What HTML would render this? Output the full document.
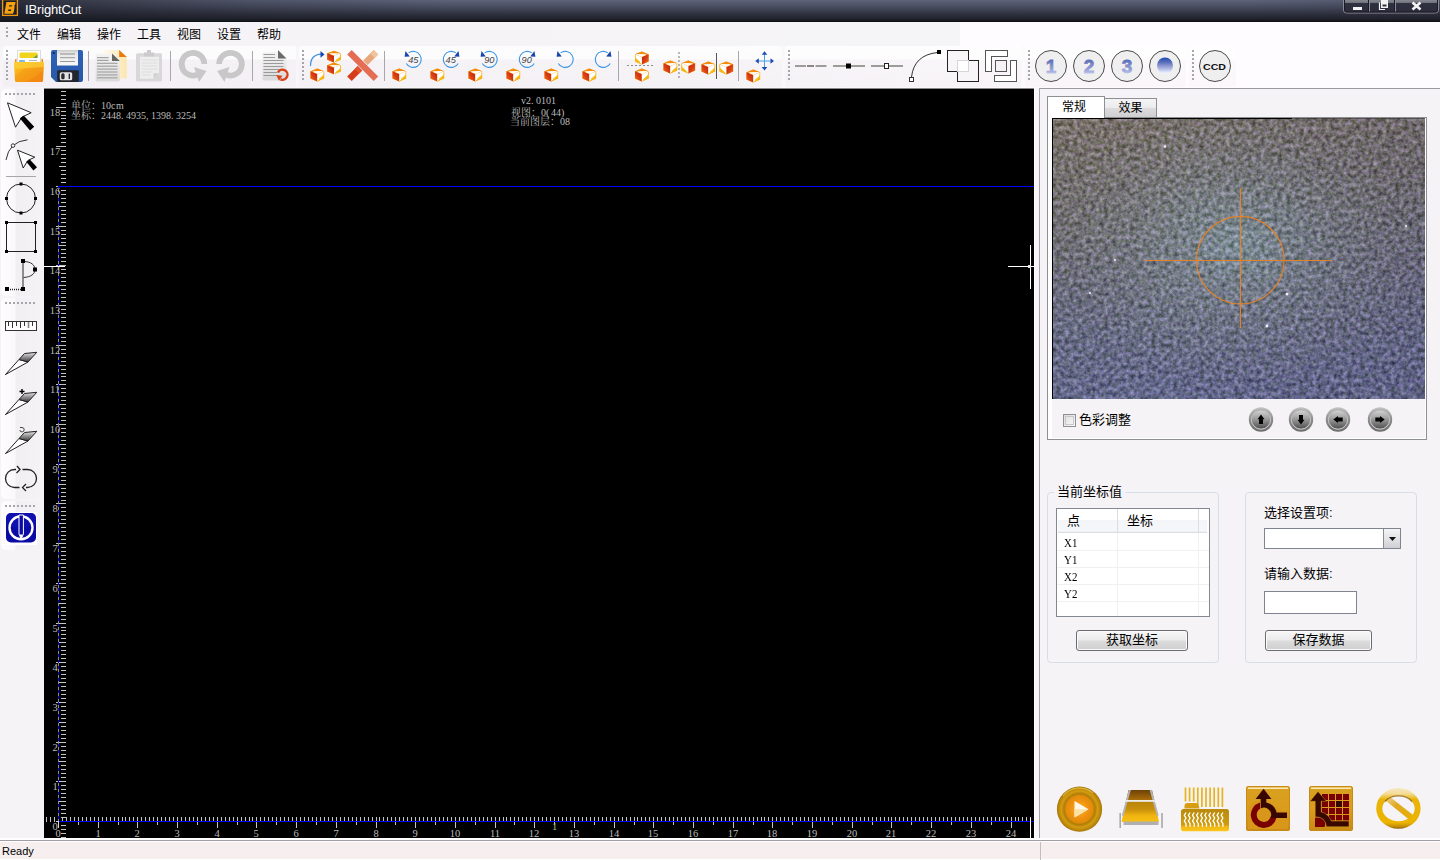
<!DOCTYPE html>
<html lang="zh-CN">
<head>
<meta charset="utf-8">
<title>IBrightCut</title>
<style>
html,body{margin:0;padding:0;}
body{width:1440px;height:860px;overflow:hidden;position:relative;background:#f6f3f7;font-family:"Liberation Sans","Noto Sans CJK SC",sans-serif;font-size:12px;color:#000;}
.a{position:absolute;}
svg{position:absolute;overflow:visible;}
.cj{font-family:"Liberation Sans","Noto Sans CJK SC",sans-serif;}
.sr{font-family:"Liberation Serif","Noto Serif CJK SC",serif;}
#title{left:0;top:0;width:1440px;height:22px;background:linear-gradient(90deg,rgba(24,26,34,.75) 0,rgba(24,26,34,.5) 90px,rgba(24,26,34,.2) 250px,rgba(24,26,34,0) 450px,rgba(24,26,34,0) 1250px,rgba(24,26,34,.2) 1440px),linear-gradient(#5e6378 0,#545970 3px,#484c5f 7px,#3a3d4d 11px,#2c2e3b 15px,#20222c 19px,#15161d 21px,#08080c 22px);}
#title .name{left:25px;top:2px;font-size:13px;line-height:16px;color:#fff;letter-spacing:-0.15px;}
#menubar{left:0;top:22px;width:1440px;height:24px;background:linear-gradient(90deg,#f6f3f7 0,#f5f4f6 960px,#fffcff 960px);}
#menubar .mi{top:6px;width:40px;text-align:center;font-size:12px;line-height:14px;}
#toolrow{left:0;top:46px;width:1440px;height:42px;background:#f6f3f7;}
.tb{top:0;height:41px;border-radius:3px;background:linear-gradient(rgba(255,255,255,.75) 0,rgba(255,255,255,.6) 13px,rgba(120,110,125,.022) 14px,rgba(120,110,125,.028) 27px,rgba(130,100,130,.034) 41px);}
.grip{width:3px;background:repeating-linear-gradient(#a8a5aa 0,#a8a5aa 2px,transparent 2px,transparent 4px);}
.gripw{height:3px;background:repeating-linear-gradient(90deg,#a8a5aa 0,#a8a5aa 2px,transparent 2px,transparent 4px);}
.sep{width:1px;background:#a9a6ab;}
.lb{left:1px;width:42px;border-radius:5px 0 0 5px;background:linear-gradient(90deg,#fefcff 0,#faf8fb 14px,#f2eff3 15px,#f6f3f7 42px);}
#left{left:0;top:88px;width:44px;height:752px;background:#f6f3f7;}
#canvas{left:44px;top:88px;width:990px;height:750px;background:#000;border-top:1px solid #8a888c;box-sizing:border-box;}
#status{left:0;top:842px;width:1440px;height:17px;background:#f7efef;}
#sline{left:0;top:838px;width:1440px;height:22px;background:linear-gradient(#fff 0,#fff 2px,#a09ea2 2px,#a09ea2 3px,#fff 3px);}
.btn{height:21px;box-sizing:border-box;border:1px solid #6c6c70;border-radius:3px;background:linear-gradient(#f7f7f7 0,#ebebeb 48%,#dcdcdc 52%,#cfcfcf 100%);text-align:center;font-size:13px;line-height:18px;box-shadow:inset 0 0 0 1px #fbfbfb;}
#right{left:1040px;top:88px;width:400px;height:752px;background:#f6f3f7;}
</style>
</head>
<body>
<div id="title" class="a">
  <svg width="22" height="22" style="left:0;top:0" viewBox="0 0 22 22">
    <rect x="2.600" y="-.4" width="14.800" height="15.800" fill="#1a1f2e" stroke="#f0980a" stroke-width="1.300"/>
    <path d="M6.400 2.100h9.200l-.5 2.600-.9 1 .5 1-.9 5.200-1 1.900H4.300z" fill="#f7a010"/>
    <path d="M9.300 5.200h2.700l-.3 1.400H9zM8.400 9.500h2.700l-.3 1.400H8.100z" fill="#1a1f2e"/>
  </svg>
  <div class="a name">IBrightCut</div>
  <svg width="100" height="22" style="left:1340px;top:0" viewBox="1340 0 100 22">
    <defs><linearGradient id="tbg" x1="0" y1="0" x2="0" y2="1"><stop offset="0" stop-color="#8e9098"/><stop offset="0.3" stop-color="#6d6f79"/><stop offset="0.31" stop-color="#2f3141"/><stop offset="1" stop-color="#2b2d3c"/></linearGradient></defs>
    <path d="M1343.5 -1V10a3 3 0 0 0 3 3h89a3 3 0 0 0 3-3V-1z" fill="url(#tbg)" stroke="#8a8c95" stroke-width="1"/>
    <path d="M1369.5 0V12M1395.500 0V12" stroke="#8a8c95" stroke-width="1" fill="none"/>
    <path d="M1368.5 0V12M1394.500 0V12M1344.5 0V10a2 2 0 0 0 2 2h89a2 2 0 0 0 2-2V0" stroke="#1a1b25" stroke-width="1" fill="none"/>
    <rect x="1353" y="7" width="9" height="3" fill="#f2f2f2"/>
    <path d="M1379.500 2.500v7h5.500" stroke="#f2f2f2" fill="none" stroke-width="1.2"/>
    <rect x="1381" y="0" width="7" height="8" fill="#f2f2f2"/>
    <rect x="1382.500" y="4.500" width="4" height="2" fill="#2f3141" stroke="#f2f2f2" stroke-width="0"/>
    <path d="M1412.500 2.500l8 7M1420.500 2.500l-8 7" stroke="#f4f4f4" stroke-width="2.600" fill="none"/>
  </svg>
</div>
<div id="menubar" class="a">
  <div class="a grip" style="left:6px;top:5px;height:11px;width:2px"></div>
  <div class="a mi" style="left:9px">文件</div>
  <div class="a mi" style="left:49px">编辑</div>
  <div class="a mi" style="left:89px">操作</div>
  <div class="a mi" style="left:129px">工具</div>
  <div class="a mi" style="left:169px">视图</div>
  <div class="a mi" style="left:209px">设置</div>
  <div class="a mi" style="left:249px">帮助</div>
</div>
<div id="toolrow" class="a" style="background:linear-gradient(90deg,#f7f4f8 0,#f9f7fa 780px,#fffcff 1200px)">
  <div class="a tb" style="left:3px;width:293px"></div>
  <div class="a tb" style="left:299px;width:483px"></div>
  <div class="a tb" style="left:785px;width:237px"></div>
  <div class="a tb" style="left:1025px;width:161px"></div>
  <div class="a tb" style="left:1189px;width:47px"></div>
  <div class="a grip" style="left:6px;top:4px;height:31px;width:2px"></div>
  <div class="a grip" style="left:302px;top:4px;height:31px;width:2px"></div>
  <div class="a grip" style="left:788px;top:4px;height:31px;width:2px"></div>
  <div class="a grip" style="left:1028px;top:4px;height:31px;width:2px"></div>
  <div class="a grip" style="left:1192px;top:4px;height:31px;width:2px"></div>
  <div class="a sep" style="left:88px;top:5px;height:30px"></div>
  <div class="a sep" style="left:170px;top:5px;height:30px"></div>
  <div class="a sep" style="left:252px;top:5px;height:30px"></div>
  <div class="a sep" style="left:384px;top:5px;height:30px"></div>
  <div class="a sep" style="left:618px;top:5px;height:30px"></div>
  <div class="a sep" style="left:738px;top:5px;height:30px"></div>
</div>
<svg id="tbicons" width="1440" height="42" style="left:0;top:46px" viewBox="0 46 1440 42">
<defs>
  <linearGradient id="gFold" x1="0" y1="0" x2="1" y2="1"><stop offset="0" stop-color="#fcc419"/><stop offset="0.35" stop-color="#f8b01a"/><stop offset="0.36" stop-color="#f6a318"/><stop offset="0.7" stop-color="#f49716"/><stop offset="0.71" stop-color="#f28c14"/><stop offset="1" stop-color="#f08410"/></linearGradient>
  <linearGradient id="gBlue" x1="0" y1="0" x2="0" y2="1"><stop offset="0" stop-color="#2f62b8"/><stop offset="1" stop-color="#2657a8"/></linearGradient>
  <linearGradient id="gLbl" x1="0" y1="0" x2="0" y2="1"><stop offset="0" stop-color="#c9c9c9"/><stop offset="0.2" stop-color="#e6e6e6"/><stop offset="1" stop-color="#fafafa"/></linearGradient>
  <linearGradient id="gCream" x1="0" y1="0" x2="1" y2="0"><stop offset="0" stop-color="#fffaf0"/><stop offset="0.6" stop-color="#fdeec8"/><stop offset="1" stop-color="#fbe6b0"/></linearGradient>
  <linearGradient id="gDoc" x1="0" y1="0" x2="0" y2="1"><stop offset="0" stop-color="#f4f4f4"/><stop offset="1" stop-color="#d9d9d9"/></linearGradient>
  <linearGradient id="gCubL" x1="1" y1="0" x2="0" y2="1"><stop offset="0" stop-color="#c41c10"/><stop offset="0.5" stop-color="#d63c14"/><stop offset="0.8" stop-color="#e66010"/><stop offset="1" stop-color="#f49010"/></linearGradient><linearGradient id="gCubL2" x1="0" y1="0" x2="1" y2="1"><stop offset="0" stop-color="#c41c10"/><stop offset="0.5" stop-color="#d63c14"/><stop offset="0.8" stop-color="#e66010"/><stop offset="1" stop-color="#f49010"/></linearGradient><linearGradient id="gCubR2" x1="1" y1="0" x2="0" y2="1"><stop offset="0" stop-color="#ffffff"/><stop offset="0.5" stop-color="#ffffff"/><stop offset="0.52" stop-color="#f8c21a"/><stop offset="1" stop-color="#f5a60f"/></linearGradient>
  <linearGradient id="gCubR" x1="0" y1="0" x2="1" y2="1"><stop offset="0" stop-color="#ffffff"/><stop offset="0.5" stop-color="#ffffff"/><stop offset="0.52" stop-color="#f8c21a"/><stop offset="1" stop-color="#f5a60f"/></linearGradient>
  <linearGradient id="gNum" x1="0" y1="0" x2="0" y2="1"><stop offset="0" stop-color="#3f58b4"/><stop offset="0.35" stop-color="#7480c0"/><stop offset="0.7" stop-color="#9fa9dc"/><stop offset="1" stop-color="#e4ebfa"/></linearGradient>
  <linearGradient id="gBall" x1="0" y1="0" x2="0" y2="1"><stop offset="0" stop-color="#1f4db0"/><stop offset="0.3" stop-color="#5a6fbc"/><stop offset="0.5" stop-color="#8a93cc"/><stop offset="0.75" stop-color="#b8c4ea"/><stop offset="1" stop-color="#f4f7ff"/></linearGradient>
  <g id="cube">
    <path d="M7 0L13.800 2.900L13.800 10L7 13L0.200 10L0.200 2.900Z" fill="#f7a014"/>
    <path d="M7 0.200L13.600 2.900L7 5.700L0.400 2.900Z" fill="#f58c0c"/>
    <path d="M3 2.900L11.600 2.700L12.800 3.200L7.300 5.500L2.600 3.600Z" fill="#fff"/>
    <path d="M0.200 2.900L7 5.800L7 13L0.200 10Z" fill="url(#gCubL)"/>
    <path d="M7 5.800L13.800 2.900L13.800 10L7 13Z" fill="url(#gCubR)"/>
    <path d="M7.600 6L13 3.700L13 6.600L8.200 10.800L7.600 10.800Z" fill="#fff"/>
  </g>
  <g id="cubeR">
    <path d="M7 0L13.800 2.900L13.800 10L7 13L0.200 10L0.200 2.900Z" fill="#f7a014"/>
    <path d="M7 0.200L13.600 2.900L7 5.700L0.400 2.900Z" fill="#f58c0c"/>
    <path d="M11 2.900L2.400 2.700L1.200 3.200L6.700 5.500L11.400 3.600Z" fill="#fff"/>
    <path d="M13.800 2.900L7 5.800L7 13L13.800 10Z" fill="url(#gCubL2)"/>
    <path d="M7 5.800L0.200 2.900L0.200 10L7 13Z" fill="url(#gCubR2)"/>
    <path d="M6.400 6L1 3.700L1 6.600L5.800 10.800L6.400 10.800Z" fill="#fff"/>
  </g>
</defs>
<!-- open folder -->
<g>
  <rect x="17.500" y="50.500" width="23" height="14" fill="#fff" stroke="#dcdcdc" stroke-width="1"/>
  <rect x="19.500" y="52.500" width="18" height="5.500" rx="1.200" fill="#f0d41c"/>
  <path d="M33 58L37.500 54.500V58Z" fill="#6f9a4a"/>
  <rect x="19" y="60" width="6" height="3" rx="1" fill="#7db8e6"/>
  <rect x="29" y="60" width="8" height="1" fill="#b5b5b5"/>
  <path d="M15 62v-2.500l1.500-1v3.500zM43 62v-2.500l-1.500-1v3.500z" fill="#f08a10"/>
  <path d="M14 63.500q0-1.500 1.500-1.500h27q1.500 0 1.500 1.500l-1 17q0 1.500-1.500 1.500h-25q-1.500 0-1.500-1.500z" fill="url(#gFold)"/>
  <path d="M14 63.500q0-1.500 1.500-1.500h27q1.500 0 1.500 1.500l-.2 3.500-29.600 2z" fill="#fcd23a" opacity=".7"/>
</g>
<!-- save floppy -->
<g>
  <path d="M53 50h28q2 0 2 2v28q0 2-2 2H56l-5-5V52q0-2 2-2z" fill="url(#gBlue)"/>
  <rect x="57" y="50" width="21" height="15.500" fill="url(#gLbl)"/>
  <rect x="60" y="53.300" width="15" height="1.400" fill="#a9a9a9"/>
  <rect x="60" y="57.200" width="15" height="1" fill="#9a9a9a"/>
  <rect x="60" y="61" width="15" height="1" fill="#9a9a9a"/>
  <rect x="52.800" y="52" width="2" height="2" fill="#142a5a"/>
  <rect x="57.200" y="70.200" width="21.600" height="11.800" rx="1" fill="#24262e"/>
  <rect x="59.800" y="72.200" width="12.400" height="8" rx="1.500" fill="#e4e4e4"/>
  <rect x="61.200" y="73.200" width="3.400" height="6" rx="1.500" fill="#2b2d35"/>
  <rect x="68.600" y="73.400" width="1.400" height="5.600" rx=".6" fill="#2b2d35"/>
</g>
<!-- copy -->
<g>
  <path d="M102.600 50h16.600l7.600 7v20.400q0 1-1 1h-23.200z" fill="url(#gCream)"/>
  <path d="M119.200 50l7.600 7h-7.600z" fill="#e87a10"/>
  <path d="M95.600 55q0-1.400 1.400-1.400h15l7.800 7.500v19q0 1.500-1.500 1.500h-21.200q-1.500 0-1.500-1.500z" fill="url(#gDoc)"/>
  <path d="M112 53.600l7.800 7.500h-7.800z" fill="#666"/>
  <g fill="#a4a4a4"><rect x="97" y="57" width="11.600" height="1.200"/><rect x="97" y="59.800" width="11.600" height="1.200"/><rect x="97" y="62.700" width="20.500" height="1.200"/><rect x="97" y="65.600" width="20.500" height="1.200"/><rect x="97" y="68.500" width="20.500" height="1.200"/><rect x="97" y="71.400" width="20.500" height="1.200"/><rect x="97" y="74.300" width="20.500" height="1.200"/><rect x="97" y="77.200" width="20.500" height="1.200"/></g>
</g>
<!-- paste (disabled) -->
<g>
  <rect x="136" y="53.300" width="26" height="28.300" rx="1.500" fill="#d9d7d9"/>
  <path d="M144 56.800v-4.300h3v-2.500h4v2.500h3v4.300z" fill="#cccacc"/>
  <path d="M140 56.800h19v16.500l-5.500 5.500h-13.500z" fill="#eeeeee"/>
  <path d="M159 73.300l-5.500 5.500v-5.500z" fill="#d0d0d0"/>
  <g fill="#dcdcdc"><rect x="141.500" y="59.500" width="16" height="1"/><rect x="141.500" y="62.500" width="16" height="1"/><rect x="141.500" y="65.500" width="16" height="1"/><rect x="141.500" y="68.500" width="16" height="1"/><rect x="141.500" y="71.500" width="10" height="1"/><rect x="141.500" y="74.500" width="9" height="1"/></g>
</g>
<!-- undo/redo (disabled) -->

<g>
  <path d="M193 50a14.200 14.200 0 1 0 8.500 25.500l-3-4.800A8.500 8.500 0 1 1 201.500 64l5.700 0A14.200 14.200 0 0 0 193 50z" fill="#c8c8c8"/>
  <path d="M194 67l12.500 4-7.500 11z" fill="#c8c8c8"/>
  <path d="M230.500 50a14.200 14.200 0 1 1 -8.500 25.500l3-4.800A8.500 8.500 0 1 0 222 64l-5.700 0A14.200 14.200 0 0 1 230.500 50z" fill="#c8c8c8"/>
  <path d="M229.500 67l-12.500 4 7.500 11z" fill="#c8c8c8"/>
</g>
<!-- doc refresh -->
<g>
  <path d="M262.500 52h15.500l8.500 8v19q0 1.500-1.500 1.500h-21q-1.500 0-1.500-1.500z" fill="url(#gDoc)"/>
  <path d="M278 50l8.500 8.500h-8.500z" fill="#6b6b6b"/>
  <g fill="#9a9a9a"><rect x="263.500" y="54" width="11.500" height="1"/><rect x="263.500" y="57" width="11.500" height="1"/><rect x="263.500" y="60" width="20" height="1"/><rect x="263.500" y="63" width="20" height="1"/><rect x="263.500" y="66" width="20" height="1"/><rect x="263.500" y="69" width="20" height="1"/><rect x="263.500" y="72" width="14" height="1"/><rect x="263.500" y="75" width="14" height="1"/></g>
  <path d="M278 72.500a5 5 0 1 1 2.500 6.800" fill="none" stroke="#d8431c" stroke-width="2.400"/>
  <path d="M276.200 75l6.200 .8-3.400 5z" fill="#d8431c"/>
</g>
</svg>
<svg id="tbicons2" width="1440" height="42" style="left:0;top:46px" viewBox="0 46 1440 42">
<!-- group move -->
<use href="#cube" x="310.3" y="68.4"/><use href="#cube" transform="translate(327,50.700) scale(1,.9)"/><use href="#cube" transform="translate(327,62.600) scale(1,.9)"/>
<path d="M310.500 66q0-11.500 11-11.800" fill="none" stroke="#3d8fe0" stroke-width="1.2"/>
<path d="M320.500 51l4 3.500-4 3.200z" fill="#1746b0"/>
<!-- delete -->
<g transform="translate(-.8,0)"><path d="M348 54.500l4.500-4.500 26.500 26.500-4.500 4.500z" fill="#e36e54"/><path d="M374.500 50l4.500 4.500-10.500 10.500-4.500-4.500z" fill="#e9a77c"/><path d="M374.500 50l4.500 4.500-3.500 3.500-4.500-4.500z" fill="#f0c49c"/><path d="M352.500 81l-4.500-4.500 10.500-10.500 4.500 4.500z" fill="#d63c1c"/><path d="M358.500 66l4.500 4.500-3 3-4.500-4.500z" fill="#e0562c"/></g>
<!-- rotate -->
<use href="#cube" x="392.3" y="68.4"/><path d="M408.61 52.85A8 8 0 1 1 406.27 63.40" fill="none" stroke="#3d96e4" stroke-width="1.100"/><path d="M405.5 51.0l4.300 5.500-5.200 .2z" fill="#1746b0"/><text x="413.3" y="62.7" font-family="Liberation Sans, sans-serif" font-style="italic" font-size="9.200" text-anchor="middle" fill="#444">45</text>
<use href="#cube" x="430.3" y="68.4"/><path d="M455.89 52.85A8 8 0 1 0 458.23 63.40" fill="none" stroke="#3d96e4" stroke-width="1.100"/><path d="M458.5 51.0l-4.300 5.500 5.200 .2z" fill="#1746b0"/><text x="450.7" y="62.7" font-family="Liberation Sans, sans-serif" font-style="italic" font-size="9.200" text-anchor="middle" fill="#444">45</text>
<use href="#cube" x="468.3" y="68.4"/><path d="M484.61 52.85A8 8 0 1 1 482.27 63.40" fill="none" stroke="#3d96e4" stroke-width="1.100"/><path d="M481.5 51.0l4.300 5.500-5.200 .2z" fill="#1746b0"/><text x="489.3" y="62.7" font-family="Liberation Sans, sans-serif" font-style="italic" font-size="9.200" text-anchor="middle" fill="#444">90</text>
<use href="#cube" x="506.3" y="68.4"/><path d="M531.89 52.85A8 8 0 1 0 534.23 63.40" fill="none" stroke="#3d96e4" stroke-width="1.100"/><path d="M534.5 51.0l-4.300 5.500 5.200 .2z" fill="#1746b0"/><text x="526.7" y="62.7" font-family="Liberation Sans, sans-serif" font-style="italic" font-size="9.200" text-anchor="middle" fill="#444">90</text>
<use href="#cube" x="544.3" y="68.4"/><path d="M560.61 52.85A8 8 0 1 1 558.27 63.40" fill="none" stroke="#3d96e4" stroke-width="1.100"/><path d="M557.5 51.0l4.300 5.500-5.200 .2z" fill="#1746b0"/>
<use href="#cube" x="582.3" y="68.4"/><path d="M607.89 52.85A8 8 0 1 0 610.23 63.40" fill="none" stroke="#3d96e4" stroke-width="1.100"/><path d="M610.5 51.0l-4.300 5.500 5.200 .2z" fill="#1746b0"/>
<!-- mirror -->
<use href="#cubeR" x="634.8" y="51.4"/><use href="#cube" x="634.8" y="68.4"/>
<path d="M627 65.500h28" stroke="#8c8c8c" stroke-width="1.200" stroke-dasharray="2 2" fill="none"/>
<use href="#cube" x="663.3" y="60.4"/><use href="#cubeR" x="681.3" y="60.4"/>
<path d="M679 52v26" stroke="#8c8c8c" stroke-width="1.200" stroke-dasharray="2 2" fill="none"/>
<use href="#cube" x="701.3" y="61.4"/><use href="#cubeR" x="719.3" y="61.4"/>
<path d="M716.500 53v26" stroke="#555" stroke-width="1" fill="none"/>
<!-- move -->
<use href="#cube" x="746.3" y="69.4"/>
<path d="M764.500 54v14M757.500 61h14" stroke="#4aa0e8" stroke-width="1" fill="none"/>
<path d="M764.500 51.300l2.800 3.500h-5.600zM764.500 70.500l2.800-3.500h-5.600zM755.300 61l3.500-2.700v5.400zM774 61l-3.500-2.700v5.400z" fill="#1a4cb4"/>
<!-- lines -->
<path d="M795 66h11M815.500 66h11" stroke="#9c9c98" stroke-width="2" fill="none"/><path d="M807 66h7" stroke="#8e8686" stroke-width="2" fill="none"/>
<path d="M833 66h32" stroke="#9c9c98" stroke-width="2" fill="none"/><rect x="846" y="63.500" width="5" height="5" fill="#000"/>
<path d="M871 66h32" stroke="#9c9c98" stroke-width="2" fill="none"/><rect x="884.500" y="63.500" width="4" height="5" fill="#fff" stroke="#222" stroke-width="1"/>
<path d="M911.500 77q2.500-22 26-24.500" fill="none" stroke="#333" stroke-width="1"/><rect x="909.500" y="77.500" width="4" height="4" fill="#fff" stroke="#333" stroke-width="1"/><rect x="937" y="50" width="4" height="4" fill="#000"/>
<g shape-rendering="crispEdges"><path d="M947.500 50.500H968.500V60.500H978.500V81.500H957.500V71.500H947.500Z" fill="#f7f5f8" stroke="#222" stroke-width="1"/><rect x="957.500" y="60.500" width="11" height="11" fill="#fff" stroke="#d6d6d6" stroke-width="1"/></g>
<g fill="#fff" stroke="#555" stroke-width="1" shape-rendering="crispEdges"><path d="M985.500 50.500H1007.500V56.500H991.500V71.500H985.500Z"/><rect x="995.500" y="60.500" width="11" height="11" fill="#f4f2f4"/><path d="M1016.500 60.500V81.500H994.500V75.500H1010.500V60.500Z"/></g>
<!-- circles -->
<circle cx="1051" cy="66" r="15.500" fill="#efeff0" stroke="#4a4a4a" stroke-width="1"/>
<text x="1051" y="73" font-family="Liberation Sans, sans-serif" font-weight="bold" font-size="19" text-anchor="middle" fill="url(#gNum)" stroke="url(#gNum)" stroke-width="0.800">1</text>
<circle cx="1089" cy="66" r="15.500" fill="#efeff0" stroke="#4a4a4a" stroke-width="1"/>
<text x="1089" y="73" font-family="Liberation Sans, sans-serif" font-weight="bold" font-size="19" text-anchor="middle" fill="url(#gNum)" stroke="url(#gNum)" stroke-width="0.800">2</text>
<circle cx="1127" cy="66" r="15.500" fill="#efeff0" stroke="#4a4a4a" stroke-width="1"/>
<text x="1127" y="73" font-family="Liberation Sans, sans-serif" font-weight="bold" font-size="19" text-anchor="middle" fill="url(#gNum)" stroke="url(#gNum)" stroke-width="0.800">3</text>
<circle cx="1165" cy="66" r="15.500" fill="#efeff0" stroke="#4a4a4a" stroke-width="1"/><circle cx="1165" cy="65.500" r="8" fill="url(#gBall)"/>
<circle cx="1215" cy="66" r="15.500" fill="#efeff0" stroke="#4a4a4a" stroke-width="1"/>
<text x="1214.500" y="70.200" font-family="Liberation Sans, sans-serif" font-weight="bold" font-size="9.500" text-anchor="middle" fill="#111" textLength="23" lengthAdjust="spacingAndGlyphs">CCD</text>
</svg>
<div id="left" class="a">
  <div class="a lb" style="top:1px;height:207px"></div>
  <div class="a lb" style="top:210px;height:201px"></div>
  <div class="a lb" style="top:413px;height:49px"></div>
  <div class="a gripw" style="left:5px;top:5px;width:31px;height:2px"></div>
  <div class="a gripw" style="left:5px;top:214px;width:31px;height:2px"></div>
  <div class="a gripw" style="left:5px;top:417px;width:31px;height:2px"></div>
  <div class="a" style="left:6px;top:88px;width:30px;height:1px;background:#a9a6ab"></div>
</div>
<svg id="lticons" width="44" height="752" style="left:0;top:88px" viewBox="0 88 44 752">
<defs>
  <linearGradient id="gKn" x1="0" y1="0" x2="0" y2="1"><stop offset="0" stop-color="#e8e8e8"/><stop offset="1" stop-color="#3a3a3a"/></linearGradient>
  <g id="knife">
    <path d="M5.400 374.600L19 359.500L28 362Z" fill="#fff" stroke="#222" stroke-width="1" stroke-linejoin="round"/>
    <path d="M19 359.500L24.500 353.500L36.800 352.300L28 362Z" fill="url(#gKn)" stroke="#222" stroke-width="1" stroke-linejoin="round"/>
  </g>
</defs>
<!-- pointer -->
<path d="M7.500 102.800L31.200 112.700L22 117L15.500 127.200Z" fill="#fff" stroke="#222" stroke-width="1"/>
<path d="M19.800 118.200L23.900 115.800L34.200 126.800L30 130.600Z" fill="#000"/>
<!-- node edit -->
<path d="M6 160q3-18.500 21.500-20.200" fill="none" stroke="#333" stroke-width="1"/>
<circle cx="13" cy="145.600" r="1.800" fill="#fff" stroke="#333" stroke-width="1"/>
<path d="M17.500 150.200L34.800 157.200L28 160.400L23.200 168Z" fill="#fff" stroke="#222" stroke-width="1"/>
<path d="M26.300 161.800L29.800 159.600L37 167.200L33.400 170.500Z" fill="#000"/>
<!-- circle -->
<circle cx="21" cy="198.500" r="14.500" fill="none" stroke="#222" stroke-width="1"/>
<g fill="#000"><rect x="19.500" y="182.500" width="3" height="3"/><rect x="19.500" y="211.500" width="3" height="3"/><rect x="5" y="197" width="3" height="3"/><rect x="34" y="197" width="3" height="3"/></g>
<!-- rect -->
<rect x="6.500" y="222.500" width="29" height="29" fill="none" stroke="#222" stroke-width="1"/>
<g fill="#000"><rect x="5" y="221" width="3" height="3"/><rect x="34" y="221" width="3" height="3"/><rect x="5" y="250" width="3" height="3"/><rect x="34" y="250" width="3" height="3"/></g>
<!-- P shape -->
<path d="M23 261V289" stroke="#8c8c8c" stroke-width="2" fill="none"/>
<path d="M23.500 261.500C31 261.500 35 265 35 269.500C35 274 31 277 23.500 277.500" fill="none" stroke="#333" stroke-width="1"/>
<path d="M8 289.500H22" stroke="#222" stroke-width="1.400" stroke-dasharray="1 1" fill="none"/>
<g fill="#000"><rect x="21" y="259" width="4" height="4"/><rect x="33" y="267.500" width="4" height="4"/><rect x="21" y="287" width="4" height="4"/><rect x="5" y="287" width="4" height="4"/></g>
<!-- ruler -->
<rect x="5.500" y="321.500" width="31" height="9" fill="#fff" stroke="#333" stroke-width="1"/>
<path d="M8.500 322v4M12.500 322v6M16.500 322v4M20.500 322v6M24.500 322v4M32.500 322v4" stroke="#333" stroke-width="1" fill="none"/>
<path d="M28.500 322v6" stroke="#888" stroke-width="1.600" fill="none"/>
<!-- knives -->
<use href="#knife"/>
<use href="#knife" y="40"/>
<path d="M19.500 391.500h5M22 389v5" stroke="#000" stroke-width="1.400" fill="none"/>
<use href="#knife" y="79"/>
<path d="M20 427.500h2a2.200 2.200 0 1 1 -2.200 2.600" stroke="#444" stroke-width="1" fill="none"/>
<!-- loop -->
<path d="M16 469.500h-1.500a9 9 0 0 0 0 18h5" fill="none" stroke="#222" stroke-width="1.300"/>
<path d="M26 487.500h1.500a9 9 0 0 0 0-18h-5" fill="none" stroke="#222" stroke-width="1.300"/>
<path d="M17 466l3 3.500-3.500 3.500" fill="none" stroke="#222" stroke-width="1.300"/>
<path d="M26 484l-3.500 3.500 3.500 3.500" fill="none" stroke="#222" stroke-width="1.300"/>
<!-- blue pen -->
<rect x="5" y="512" width="32" height="33" fill="#fff"/>
<rect x="6" y="513" width="30" height="29.500" rx="5" fill="#0a0aa4"/>
<rect x="6" y="513" width="30" height="14" rx="5" fill="#1414b8" opacity=".6"/>
<circle cx="21" cy="527.800" r="11.500" fill="none" stroke="#fff" stroke-width="2.400"/>
<path d="M19 515v19l2.200 5 2.200-5v-19z" fill="#0a0aa4" stroke="#fff" stroke-width="1"/>
<path d="M19.500 534.500l1.700 4.500 1.700-4.500z" fill="#fff"/>
</svg>
<div id="canvas" class="a"></div>
<svg id="cv" width="990" height="750" style="left:44px;top:88px" viewBox="44 88 990 750" shape-rendering="crispEdges">
<path d="M61 837.5H66M61 833.5H66M61 829.5H66M61 825.5H66M56 821.5H66M61 817.5H66M61 813.5H66M61 809.5H66M61 805.5H66M59 801.5H66M61 797.5H66M61 793.5H66M61 789.5H66M61 785.5H66M56 781.5H66M61 777.5H66M61 773.5H66M61 769.5H66M61 765.5H66M59 761.5H66M61 757.5H66M61 754.5H66M61 750.5H66M61 746.5H66M56 742.5H66M61 738.5H66M61 734.5H66M61 730.5H66M61 726.5H66M59 722.5H66M61 718.5H66M61 714.5H66M61 710.5H66M61 706.5H66M56 702.5H66M61 698.5H66M61 694.5H66M61 690.5H66M61 686.5H66M59 682.5H66M61 678.5H66M61 674.5H66M61 670.5H66M61 666.5H66M56 662.5H66M61 658.5H66M61 654.5H66M61 650.5H66M61 646.5H66M59 642.5H66M61 638.5H66M61 634.5H66M61 630.5H66M61 627.5H66M56 623.5H66M61 619.5H66M61 615.5H66M61 611.5H66M61 607.5H66M59 603.5H66M61 599.5H66M61 595.5H66M61 591.5H66M61 587.5H66M56 583.5H66M61 579.5H66M61 575.5H66M61 571.5H66M61 567.5H66M59 563.5H66M61 559.5H66M61 555.5H66M61 551.5H66M61 547.5H66M56 543.5H66M61 539.5H66M61 535.5H66M61 531.5H66M61 527.5H66M59 523.5H66M61 519.5H66M61 515.5H66M61 511.5H66M61 507.5H66M56 503.5H66M61 500.5H66M61 496.5H66M61 492.5H66M61 488.5H66M59 484.5H66M61 480.5H66M61 476.5H66M61 472.5H66M61 468.5H66M56 464.5H66M61 460.5H66M61 456.5H66M61 452.5H66M61 448.5H66M59 444.5H66M61 440.5H66M61 436.5H66M61 432.5H66M61 428.5H66M56 424.5H66M61 420.5H66M61 416.5H66M61 412.5H66M61 408.5H66M59 404.5H66M61 400.5H66M61 396.5H66M61 392.5H66M61 388.5H66M56 384.5H66M61 380.5H66M61 376.5H66M61 373.5H66M61 369.5H66M59 365.5H66M61 361.5H66M61 357.5H66M61 353.5H66M61 349.5H66M56 345.5H66M61 341.5H66M61 337.5H66M61 333.5H66M61 329.5H66M59 325.5H66M61 321.5H66M61 317.5H66M61 313.5H66M61 309.5H66M56 305.5H66M61 301.5H66M61 297.5H66M61 293.5H66M61 289.5H66M59 285.5H66M61 281.5H66M61 277.5H66M61 273.5H66M61 269.5H66M56 265.5H66M61 261.5H66M61 257.5H66M61 253.5H66M61 249.5H66M59 245.5H66M61 242.5H66M61 238.5H66M61 234.5H66M61 230.5H66M56 226.5H66M61 222.5H66M61 218.5H66M61 214.5H66M61 210.5H66M59 206.5H66M61 202.5H66M61 198.5H66M61 194.5H66M61 190.5H66M56 186.5H66M61 182.5H66M61 178.5H66M61 174.5H66M61 170.5H66M59 166.5H66M61 162.5H66M61 158.5H66M61 154.5H66M61 150.5H66M56 146.5H66M61 142.5H66M61 138.5H66M61 134.5H66M61 130.5H66M59 126.5H66M61 122.5H66M61 118.5H66M61 115.5H66M61 111.5H66M56 107.5H66M61 103.5H66M61 99.5H66M61 95.5H66M61 91.5H66" stroke="#c4c4c4" stroke-width="1" fill="none"/>
<path d="M46.5 817V822M50.5 817V822M54.5 817V822M62.5 817V821M66.5 817V821M70.5 817V821M74.5 817V821M78.5 817V825M82.5 817V821M86.5 817V821M90.5 817V821M94.5 817V821M98.5 817V828M102.5 817V821M106.5 817V821M110.5 817V821M114.5 817V821M118.5 817V825M122.5 817V821M125.5 817V821M129.5 817V821M133.5 817V821M137.5 817V828M141.5 817V821M145.5 817V821M149.5 817V821M153.5 817V821M157.5 817V825M161.5 817V821M165.5 817V821M169.5 817V821M173.5 817V821M177.5 817V828M181.5 817V821M185.5 817V821M189.5 817V821M193.5 817V821M197.5 817V825M201.5 817V821M205.5 817V821M209.5 817V821M213.5 817V821M217.5 817V828M221.5 817V821M225.5 817V821M229.5 817V821M233.5 817V821M237.5 817V825M241.5 817V821M245.5 817V821M249.5 817V821M252.5 817V821M256.5 817V828M260.5 817V821M264.5 817V821M268.5 817V821M272.5 817V821M276.5 817V825M280.5 817V821M284.5 817V821M288.5 817V821M292.5 817V821M296.5 817V828M300.5 817V821M304.5 817V821M308.5 817V821M312.5 817V821M316.5 817V825M320.5 817V821M324.5 817V821M328.5 817V821M332.5 817V821M336.5 817V828M340.5 817V821M344.5 817V821M348.5 817V821M352.5 817V821M356.5 817V825M360.5 817V821M364.5 817V821M368.5 817V821M372.5 817V821M376.5 817V828M379.5 817V821M383.5 817V821M387.5 817V821M391.5 817V821M395.5 817V825M399.5 817V821M403.5 817V821M407.5 817V821M411.5 817V821M415.5 817V828M419.5 817V821M423.5 817V821M427.5 817V821M431.5 817V821M435.5 817V825M439.5 817V821M443.5 817V821M447.5 817V821M451.5 817V821M455.5 817V828M459.5 817V821M463.5 817V821M467.5 817V821M471.5 817V821M475.5 817V825M479.5 817V821M483.5 817V821M487.5 817V821M491.5 817V821M495.5 817V828M499.5 817V821M503.5 817V821M506.5 817V821M510.5 817V821M514.5 817V825M518.5 817V821M522.5 817V821M526.5 817V821M530.5 817V821M534.5 817V828M538.5 817V821M542.5 817V821M546.5 817V821M550.5 817V821M554.5 817V825M558.5 817V821M562.5 817V821M566.5 817V821M570.5 817V821M574.5 817V828M578.5 817V821M582.5 817V821M586.5 817V821M590.5 817V821M594.5 817V825M598.5 817V821M602.5 817V821M606.5 817V821M610.5 817V821M614.5 817V828M618.5 817V821M622.5 817V821M626.5 817V821M630.5 817V821M634.5 817V825M637.5 817V821M641.5 817V821M645.5 817V821M649.5 817V821M653.5 817V828M657.5 817V821M661.5 817V821M665.5 817V821M669.5 817V821M673.5 817V825M677.5 817V821M681.5 817V821M685.5 817V821M689.5 817V821M693.5 817V828M697.5 817V821M701.5 817V821M705.5 817V821M709.5 817V821M713.5 817V825M717.5 817V821M721.5 817V821M725.5 817V821M729.5 817V821M733.5 817V828M737.5 817V821M741.5 817V821M745.5 817V821M749.5 817V821M753.5 817V825M757.5 817V821M761.5 817V821M764.5 817V821M768.5 817V821M772.5 817V828M776.5 817V821M780.5 817V821M784.5 817V821M788.5 817V821M792.5 817V825M796.5 817V821M800.5 817V821M804.5 817V821M808.5 817V821M812.5 817V828M816.5 817V821M820.5 817V821M824.5 817V821M828.5 817V821M832.5 817V825M836.5 817V821M840.5 817V821M844.5 817V821M848.5 817V821M852.5 817V828M856.5 817V821M860.5 817V821M864.5 817V821M868.5 817V821M872.5 817V825M876.5 817V821M880.5 817V821M884.5 817V821M888.5 817V821M891.5 817V828M895.5 817V821M899.5 817V821M903.5 817V821M907.5 817V821M911.5 817V825M915.5 817V821M919.5 817V821M923.5 817V821M927.5 817V821M931.5 817V828M935.5 817V821M939.5 817V821M943.5 817V821M947.5 817V821M951.5 817V825M955.5 817V821M959.5 817V821M963.5 817V821M967.5 817V821M971.5 817V828M975.5 817V821M979.5 817V821M983.5 817V821M987.5 817V821M991.5 817V825M995.5 817V821M999.5 817V821M1003.5 817V821M1007.5 817V821M1011.5 817V828M1015.5 817V821M1018.5 817V821M1022.5 817V821M1026.5 817V821M1030.5 817V825" stroke="#c4c4c4" stroke-width="1" fill="none"/>
<path d="M58.500 186V822" stroke="#0000ff" stroke-width="1" fill="none"/>
<path d="M58.500 189V822" stroke="#8c8c8c" stroke-width="1" stroke-dasharray="3 3" fill="none"/>
<path d="M58.500 821V828" stroke="#d8d8d8" stroke-width="1" fill="none"/>
<path d="M56 821.500H58" stroke="#d8d8d8" stroke-width="1" fill="none"/>
<path d="M58 186.500H1034" stroke="#0000ff" stroke-width="1" fill="none"/>
<path d="M59 821.500H1034" stroke="#0000ff" stroke-width="1" fill="none"/>
<path d="M1030.500 245V289M1008 266.500H1034M44 266.500H65M1030.500 818V838" stroke="#ffffff" stroke-width="1" fill="none"/>
<rect x="1028" y="265" width="3" height="3" fill="#e8e8e8"/>
</svg>
<svg id="cvt" width="990" height="750" style="left:44px;top:88px" viewBox="44 88 990 750" font-family="Liberation Serif, Noto Serif CJK SC, serif" font-size="10.500" fill="#bcbcbc">
<text x="55" y="829.5" text-anchor="middle">0</text>
<text x="55" y="789.5" text-anchor="middle">1</text>
<text x="55" y="750.5" text-anchor="middle">2</text>
<text x="55" y="710.5" text-anchor="middle">3</text>
<text x="55" y="670.5" text-anchor="middle">4</text>
<text x="55" y="631.5" text-anchor="middle">5</text>
<text x="55" y="591.5" text-anchor="middle">6</text>
<text x="55" y="551.5" text-anchor="middle">7</text>
<text x="55" y="511.5" text-anchor="middle">8</text>
<text x="55" y="472.5" text-anchor="middle">9</text>
<text x="55" y="432.5" text-anchor="middle">10</text>
<text x="55" y="392.5" text-anchor="middle">11</text>
<text x="55" y="353.5" text-anchor="middle">12</text>
<text x="55" y="313.5" text-anchor="middle">13</text>
<text x="55" y="273.5" text-anchor="middle">14</text>
<text x="55" y="234.5" text-anchor="middle">15</text>
<text x="55" y="194.5" text-anchor="middle">16</text>
<text x="55" y="154.5" text-anchor="middle">17</text>
<text x="55" y="115.5" text-anchor="middle">18</text>
<text x="58" y="837" text-anchor="middle">0</text>
<text x="98" y="837" text-anchor="middle">1</text>
<text x="137" y="837" text-anchor="middle">2</text>
<text x="177" y="837" text-anchor="middle">3</text>
<text x="217" y="837" text-anchor="middle">4</text>
<text x="256" y="837" text-anchor="middle">5</text>
<text x="296" y="837" text-anchor="middle">6</text>
<text x="336" y="837" text-anchor="middle">7</text>
<text x="376" y="837" text-anchor="middle">8</text>
<text x="415" y="837" text-anchor="middle">9</text>
<text x="455" y="837" text-anchor="middle">10</text>
<text x="495" y="837" text-anchor="middle">11</text>
<text x="534" y="837" text-anchor="middle">12</text>
<text x="574" y="837" text-anchor="middle">13</text>
<text x="614" y="837" text-anchor="middle">14</text>
<text x="653" y="837" text-anchor="middle">15</text>
<text x="693" y="837" text-anchor="middle">16</text>
<text x="733" y="837" text-anchor="middle">17</text>
<text x="772" y="837" text-anchor="middle">18</text>
<text x="812" y="837" text-anchor="middle">19</text>
<text x="852" y="837" text-anchor="middle">20</text>
<text x="891" y="837" text-anchor="middle">21</text>
<text x="931" y="837" text-anchor="middle">22</text>
<text x="971" y="837" text-anchor="middle">23</text>
<text x="1011" y="837" text-anchor="middle">24</text>
<text x="554.500" y="830" text-anchor="middle" fill="#9cc27a">1</text>
<text x="71 81 91 101 106 111 116" y="108.5" font-size="10">单位：10cm</text>
<text x="71 81 91 101 106 111 116 121 126 131 136 141 146 151 156 161 166 171 176 181 186 191" y="118.5" font-size="10">坐标：2448.4935,1398.3254</text>
<text x="521 526 531 536 541 546 551" y="104" font-size="10">v2.0101</text>
<text x="511 521 531 541 546 551 556 561" y="116" font-size="10">视图：0(44)</text>
<text x="510 520 530 540 550 560 565" y="125" font-size="10">当前图层：08</text>
</svg>
<div id="right" class="a"></div>
<div class="a" style="left:1034px;top:88px;width:6px;height:752px;background:linear-gradient(90deg,#fff 0,#fff 1px,#f8f5f9 1px)"></div>
<div class="a" style="left:1039px;top:88px;width:401px;height:1px;background:#9b999d"></div>
<div class="a" style="left:1039px;top:88px;width:1px;height:750px;background:#a3a1a5"></div>
<!-- tab control -->
<div class="a" style="left:1047px;top:117px;width:380px;height:323px;box-sizing:border-box;border:1px solid #8e8f93;background:#fff"></div>
<div class="a" style="left:1052px;top:399px;width:373px;height:39px;background:#f6f3f7"></div>
<div class="a cj" style="left:1047px;top:96px;width:58px;height:22px;box-sizing:border-box;border:1px solid #8e8f93;border-bottom:none;background:#fff;text-align:center;font-size:12px;line-height:21px;padding-right:4px;">常规</div>
<div class="a cj" style="left:1104px;top:98px;width:53px;height:19px;box-sizing:border-box;border:1px solid #8e8f93;border-bottom:none;background:linear-gradient(#f4f3f5 0,#ebeaec 50%,#dcdbdd 51%,#cfced0 100%);text-align:center;font-size:12px;line-height:18px;">效果</div>
<svg id="cam" width="373" height="281" style="left:1052px;top:118px" viewBox="0 0 373 281">
  <defs>
    <filter id="nz" x="0" y="0" width="100%" height="100%" color-interpolation-filters="sRGB">
      <feTurbulence type="fractalNoise" baseFrequency="0.23 0.23" numOctaves="3" seed="5" result="t"/>
      <feColorMatrix in="t" type="matrix" values="0.9 0.05 0.05 0 0  0.82 0.18 0 0 0  1.05 0 0.25 0 -0.15  0 0 0 0 1" result="n"/>
      <feComposite in="SourceGraphic" in2="n" operator="arithmetic" k1="0" k2="1" k3="0.6" k4="-0.305"/>
    </filter>
    <linearGradient id="camg" x1="0" y1="0" x2="0.12" y2="1"><stop offset="0" stop-color="#7a726c"/><stop offset="0.4" stop-color="#717074"/><stop offset="0.7" stop-color="#6a6d82"/><stop offset="1" stop-color="#656a8c"/></linearGradient>
    <linearGradient id="camv" x1="0" y1="0" x2="1" y2="0"><stop offset="0.3" stop-color="#4a4060" stop-opacity="0"/><stop offset="1" stop-color="#4a4060" stop-opacity=".16"/></linearGradient>
    <radialGradient id="camr" cx="0.5" cy="0.45" r="0.5"><stop offset="0" stop-color="#849aa2" stop-opacity=".8"/><stop offset="1" stop-color="#7a7a80" stop-opacity="0"/></radialGradient>
  </defs>
  <g filter="url(#nz)">
  <rect width="373" height="281" fill="url(#camg)"/>
  <rect width="373" height="281" fill="url(#camr)"/>
  <rect width="373" height="281" fill="url(#camv)"/>
  </g>
  <path d="M0 .5H240M.5 0V281" stroke="#000" stroke-width="1" fill="none"/><path d="M240 .5H373" stroke="#000" stroke-opacity=".3" stroke-width="1" fill="none"/>
  <g fill="#f2f2f2"><circle cx="113" cy="28.500" r="1.300"/><circle cx="235" cy="176" r="1.500"/><circle cx="215" cy="208" r="1.400"/><circle cx="63" cy="142" r="1"/><circle cx="354" cy="108" r="1"/><circle cx="38" cy="175" r="1"/></g>
  <g stroke="#e2822a" stroke-width="1.200" fill="none">
    <circle cx="188.300" cy="142.200" r="43.800"/>
    <path d="M93.500 142.500H279.500M188.500 70V210"/>
  </g>
</svg>
<!-- checkbox + round buttons -->
<div class="a" style="left:1063px;top:414px;width:13px;height:13px;box-sizing:border-box;border:1px solid #8e8f93;background:linear-gradient(135deg,#dcdcdc,#fafafa)"></div>
<div class="a" style="left:1065px;top:416px;width:9px;height:9px;box-sizing:border-box;border:1px solid #c8c8c8;"></div>
<div class="a cj" style="left:1079px;top:412px;font-size:13px;line-height:16px;">色彩调整</div>
<svg id="navb" width="160" height="30" style="left:1245px;top:405px" viewBox="1245 405 160 30">
  <defs>
    <linearGradient id="gNb" x1="0" y1="0" x2="0" y2="1"><stop offset="0" stop-color="#d6d6d6"/><stop offset="0.5" stop-color="#989898"/><stop offset="1" stop-color="#4c4c4c"/></linearGradient>
    <linearGradient id="gNr" x1="0" y1="0" x2="0" y2="1"><stop offset="0" stop-color="#c4c4c4"/><stop offset="0.5" stop-color="#8c8c8c"/><stop offset="1" stop-color="#6e6e6e"/></linearGradient>
    <linearGradient id="gNh" x1="0" y1="0" x2="0" y2="1"><stop offset="0" stop-color="#a8a8a8"/><stop offset="1" stop-color="#e4e4e4"/></linearGradient>
    <g id="nb"><circle r="12.200" fill="url(#gNr)"/><circle r="9.700" fill="url(#gNb)" stroke="url(#gNh)" stroke-width=".9"/></g>
  </defs>
  <use href="#nb" x="1261" y="419.500"/><path d="M1261 414.600l3.500 4.700h-1.500v4.700h-4v-4.700h-1.500z" fill="#000"/>
  <use href="#nb" x="1301" y="419.500"/><path d="M1301 424.400l3.500-4.700h-1.500v-4.700h-4v4.700h-1.500z" fill="#000"/>
  <use href="#nb" x="1338" y="419.500"/><path d="M1333.300 419.500l4.700-3.500v1.500h4.700v4h-4.700v1.500z" fill="#000"/>
  <use href="#nb" x="1380" y="419.500"/><path d="M1384.700 419.500l-4.700-3.500v1.500h-4.700v4h4.700v1.500z" fill="#000"/>
</svg>
<!-- group boxes -->
<div class="a" style="left:1047px;top:492px;width:172px;height:171px;box-sizing:border-box;border:1px solid #d5dfe5;border-radius:4px;"></div>
<div class="a cj" style="left:1054px;top:484px;padding:0 3px;background:#f6f3f7;font-size:13px;line-height:16px;">当前坐标值</div>
<div class="a" style="left:1056px;top:508px;width:154px;height:109px;box-sizing:border-box;border:1px solid #828790;background:#fff"></div>
<div class="a" style="left:1058px;top:509px;width:149px;height:24px;background:linear-gradient(#fff 0,#fff 45%,#f4f5f9 46%,#f6f7fa 92%,#d5d6dc 100%)"></div>
<div class="a" style="left:1117px;top:509px;width:1px;height:107px;background:linear-gradient(#dcdde3 0,#dcdde3 24px,#f0f0f0 24px)"></div>
<div class="a" style="left:1198px;top:509px;width:1px;height:107px;background:linear-gradient(#dcdde3 0,#dcdde3 24px,#f0f0f0 24px)"></div>
<div class="a" style="left:1057px;top:550px;width:152px;height:1px;background:#f0f0f0"></div>
<div class="a" style="left:1057px;top:567px;width:152px;height:1px;background:#f0f0f0"></div>
<div class="a" style="left:1057px;top:584px;width:152px;height:1px;background:#f0f0f0"></div>
<div class="a" style="left:1057px;top:601px;width:152px;height:1px;background:#f0f0f0"></div>
<div class="a cj" style="left:1067px;top:513px;font-size:13px;line-height:16px;">点</div>
<div class="a cj" style="left:1127px;top:513px;font-size:13px;line-height:16px;">坐标</div>
<div class="a sr" style="left:1064px;top:535px;font-size:13px;line-height:16px;transform:scaleX(.84);transform-origin:0 0;">X1</div>
<div class="a sr" style="left:1064px;top:552px;font-size:13px;line-height:16px;transform:scaleX(.84);transform-origin:0 0;">Y1</div>
<div class="a sr" style="left:1064px;top:569px;font-size:13px;line-height:16px;transform:scaleX(.84);transform-origin:0 0;">X2</div>
<div class="a sr" style="left:1064px;top:586px;font-size:13px;line-height:16px;transform:scaleX(.84);transform-origin:0 0;">Y2</div>
<div class="a cj btn" style="left:1076px;top:630px;width:112px;">获取坐标</div>
<div class="a" style="left:1245px;top:492px;width:172px;height:171px;box-sizing:border-box;border:1px solid #d5dfe5;border-radius:4px;"></div>
<div class="a cj" style="left:1264px;top:505px;font-size:13px;line-height:16px;">选择设置项:</div>
<div class="a" style="left:1264px;top:528px;width:137px;height:21px;box-sizing:border-box;border:1px solid #7f8490;background:#fff"></div>
<div class="a" style="left:1383px;top:529px;width:17px;height:19px;box-sizing:border-box;border-left:1px solid #8a8a92;background:linear-gradient(#f4f4f6,#e4e4e8 50%,#cfcfd4)"></div>
<svg width="7" height="4" style="left:1389px;top:537px" viewBox="0 0 7 4"><path d="M0 0h7L3.500 4z" fill="#111"/></svg>
<div class="a cj" style="left:1264px;top:566px;font-size:13px;line-height:16px;">请输入数据:</div>
<div class="a" style="left:1264px;top:591px;width:93px;height:23px;box-sizing:border-box;border:1px solid #7f8490;background:#fff"></div>
<div class="a cj btn" style="left:1265px;top:630px;width:107px;">保存数据</div>
<svg id="bicons" width="400" height="60" style="left:1040px;top:780px" viewBox="1040 780 400 60">
<defs>
  <radialGradient id="gPl" cx="0.5" cy="0.5" r="0.5"><stop offset="0" stop-color="#f8b828"/><stop offset="0.4" stop-color="#f09010"/><stop offset="0.6" stop-color="#e08c0a"/><stop offset="0.68" stop-color="#b07c08"/><stop offset="0.8" stop-color="#d49c10"/><stop offset="0.92" stop-color="#bc880a"/><stop offset="1" stop-color="#a47408"/></radialGradient>
  <linearGradient id="gCv" x1="0" y1="0" x2="0" y2="1"><stop offset="0" stop-color="#6e4206"/><stop offset="0.3" stop-color="#a86c0a"/><stop offset="0.36" stop-color="#b8840a"/><stop offset="0.6" stop-color="#c8900c"/><stop offset="0.8" stop-color="#f0b410"/><stop offset="1" stop-color="#f8c014"/></linearGradient>
  <linearGradient id="gSq" x1="0" y1="0" x2="0" y2="1"><stop offset="0" stop-color="#e8b830"/><stop offset="0.08" stop-color="#d8a020"/><stop offset="0.5" stop-color="#dc9c1c"/><stop offset="1" stop-color="#c88a14"/></linearGradient>
  <linearGradient id="gHt" x1="0" y1="0" x2="0" y2="1"><stop offset="0" stop-color="#b88a0c"/><stop offset="0.7" stop-color="#d09c10"/><stop offset="0.8" stop-color="#f0b814"/><stop offset="1" stop-color="#fcc81c"/></linearGradient>
  <linearGradient id="gNoR" x1="0" y1="0" x2="0" y2="1"><stop offset="0" stop-color="#f6e8c0"/><stop offset="0.14" stop-color="#f4dc98"/><stop offset="0.28" stop-color="#e8b408"/><stop offset="0.85" stop-color="#ecb400"/><stop offset="0.95" stop-color="#c08a0a"/><stop offset="1" stop-color="#8a5c0a"/></linearGradient><linearGradient id="gNoB" x1="0" y1="0" x2="1" y2="1"><stop offset="0" stop-color="#f0d48c"/><stop offset="0.4" stop-color="#e0a820"/><stop offset="1" stop-color="#e8b000"/></linearGradient>
</defs>
<!-- play -->
<circle cx="1079.500" cy="809.200" r="22.600" fill="url(#gPl)"/>
<path d="M1063 796a21 21 0 0 1 30-3" fill="none" stroke="#f0d060" stroke-width="1.200" opacity=".6"/>
<path d="M1074.500 801l14 8.300-14 8.300z" fill="#fff8e8"/>
<path d="M1074.500 809.300h14l-14 8.300z" fill="#fbe2a4"/>
<!-- conveyor -->
<path d="M1128.500 790h23.500l7 32h-37.500z" fill="url(#gCv)"/>
<path d="M1128.800 790l-7 25.500 1.800 .5 7.200-26zM1151.700 790l7 25.500-1.800 .5-7.200-26z" fill="#b4b4b4"/>
<rect x="1126" y="800" width="29.500" height="1.800" fill="#ececec"/>
<path d="M1120.200 813v15M1162 813v15" stroke="#a4a4a4" stroke-width="1.500" fill="none"/>
<rect x="1123.500" y="821.500" width="35" height="3.500" fill="#b0b0b0"/>
<!-- heater -->
<path d="M1185.5 787.500v14 M1189.6 787.500v14 M1193.7 787.500v14 M1197.8 787.500v19.5 M1201.9 787.500v19.5 M1206.0 787.500v19.5 M1210.1 787.500v19.5 M1214.2 787.500v19.5 M1218.3 787.500v19.5 M1222.4 787.500v19.5" stroke="#e8b41c" stroke-width="1.700" fill="none"/>
<path d="M1184.500 806q0-3 3-3h8q2.500 0 3 2l1 3.500h-15z" fill="#d89c10"/>
<rect x="1181" y="809" width="48" height="22.300" rx="2.500" fill="url(#gHt)"/>
<g stroke="#fff" stroke-width="1.300" fill="none"><path id="wv" d="M1186 812.500l-1.700 2.800 1.700 2.800-1.700 2.800 1.700 2.800v3"/><use href="#wv" x="4.1"/><use href="#wv" x="8.2"/><use href="#wv" x="12.3"/><use href="#wv" x="16.4"/><use href="#wv" x="20.5"/><use href="#wv" x="24.6"/><use href="#wv" x="28.7"/><use href="#wv" x="32.8"/><use href="#wv" x="36.9"/></g>
<!-- path icon 1 -->
<rect x="1246" y="786" width="44" height="45" rx="2.500" fill="url(#gSq)"/>
<rect x="1246.500" y="786.500" width="43" height="44" rx="2" fill="none" stroke="#c88a14" stroke-width="1"/>
<path d="M1248 807q8-9 20-4 11 5 20 12v14h-40z" fill="#d8961a"/>
<rect x="1248" y="787.500" width="40" height="1.500" fill="#f6e6b8"/>
<path d="M1260 808.800A7.100 7.100 0 1 0 1270.700 816.500L1276.500 817.500A13 13 0 1 1 1260 802.500Z" fill="#780000"/>
<path d="M1263.600 788.700l7.800 10.200h-5.100v3.600a13 13 0 0 1 10.200 10h10.500v5.600h-16l-.3-.9a7.100 7.100 0 0 0 -10-8.700v-9.600h-5.100z" fill="#380800"/>
<!-- path icon 2 -->
<rect x="1309" y="786" width="44" height="45" rx="2.500" fill="url(#gSq)"/>
<rect x="1309.500" y="786.500" width="43" height="44" rx="2" fill="none" stroke="#c88a14" stroke-width="1"/>
<rect x="1311" y="787.500" width="40" height="1.500" fill="#f6e6b8"/>
<g fill="#780000"><rect x="1322" y="794" width="6" height="6"/><rect x="1329" y="794" width="6" height="6"/><rect x="1336" y="794" width="6" height="6"/><rect x="1343" y="794" width="6" height="6"/>
<rect x="1322" y="801" width="6" height="6"/><rect x="1329" y="801" width="6" height="6"/><rect x="1336" y="801" width="6" height="6" fill="#380800"/><rect x="1343" y="801" width="6" height="6"/>
<rect x="1322" y="808" width="6" height="6"/><rect x="1329" y="808" width="6" height="6"/><rect x="1336" y="808" width="6" height="6"/><rect x="1343" y="808" width="6" height="6"/>
<rect x="1329" y="815" width="6" height="5.500"/><rect x="1336" y="815" width="6" height="5.500"/><rect x="1343" y="815" width="6" height="5.500"/></g>
<path d="M1315 827v-9.500h3.500a6.500 6.500 0 0 1 6 9.500z" fill="#780000"/>
<path d="M1318 791.500l8.500 9.800h-5.200v10.700q7 1.500 10 9h17.700v5.800h-22.500q-1-10-11.300-10v-15.500h-5.200z" fill="#380800" stroke="#d8a020" stroke-width=".5"/>
<!-- no symbol -->
<path d="M1385.500 800.500l4-4 23.500 18.500-4 4.500z" fill="url(#gNoB)"/>
<path d="M1376.200 808.400a22.200 20.400 0 1 0 44.400 0a22.200 20.400 0 1 0 -44.400 0zM1382.300 808.600a16.200 12.600 0 1 1 32.400 0a16.200 12.600 0 1 1 -32.400 0z" fill="url(#gNoR)" fill-rule="evenodd"/>
<path d="M1385 801.500A16.200 12.600 0 0 1 1412 801.500" fill="none" stroke="#7a4c08" stroke-width="1.400" opacity=".65"/>
</svg>
<div id="sline" class="a"></div>
<div id="status" class="a">
  <div class="a" style="left:2px;top:2px;font-size:11px;line-height:14px;color:#000;font-family:'Liberation Sans',sans-serif;">Ready</div>
  <div class="a" style="left:1040px;top:0;width:1px;height:18px;background:#c0bec2"></div>
</div>
</body>
</html>
